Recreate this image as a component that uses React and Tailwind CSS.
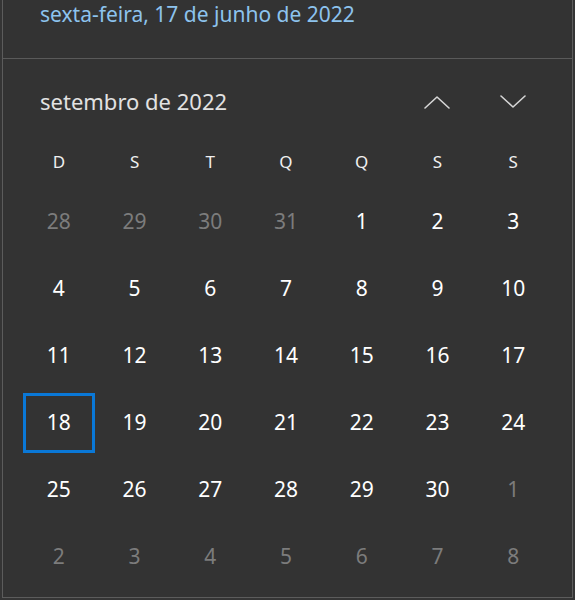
import React from "react";

const weekDays = ["D", "S", "T", "Q", "Q", "S", "S"];

// [day, inMonth]
const weeks = [
  [[28, false], [29, false], [30, false], [31, false], [1, true], [2, true], [3, true]],
  [[4, true], [5, true], [6, true], [7, true], [8, true], [9, true], [10, true]],
  [[11, true], [12, true], [13, true], [14, true], [15, true], [16, true], [17, true]],
  [[18, true], [19, true], [20, true], [21, true], [22, true], [23, true], [24, true]],
  [[25, true], [26, true], [27, true], [28, true], [29, true], [30, true], [1, false]],
  [[2, false], [3, false], [4, false], [5, false], [6, false], [7, false], [8, false]],
];

function Chevron({ up }) {
  return (
    <svg width="28" height="16" viewBox="0 0 28 16" fill="none">
      <path
        d={up ? "M2 14 L14 3 L26 14" : "M2 2 L14 13 L26 2"}
        stroke="#d6d6d6"
        strokeWidth="1.6"
        strokeLinecap="round"
        strokeLinejoin="round"
      />
    </svg>
  );
}

export default function App() {
  return (
    <div
      className="w-[575px] h-[600px] bg-[#353535] overflow-hidden"
      style={{ fontFamily: '"Noto Sans", "Open Sans", sans-serif' }}
    >
      <div className="ml-[2px] w-[571px] h-[598px] bg-[#333333] border-x border-b border-[#5c5c5c]">
        <div className="h-[58px] pl-[37px]">
          <p className="text-[21px] leading-[28px] text-[#8dc3ee]">
            sexta-feira, 17 de junho de 2022
          </p>
        </div>
        <div className="h-px bg-[#5a5a5a]" />

        <div className="pl-[18px] w-[548px]">
          <div className="h-[84px] grid grid-cols-7 items-center">
            <span className="col-span-5 pl-[19px] text-[22px] text-[#e2e2e2]">
              setembro de 2022
            </span>
            <div className="flex justify-center pt-[2px]">
              <Chevron up />
            </div>
            <div className="flex justify-center pt-[2px]">
              <Chevron />
            </div>
          </div>

          <div className="h-[38px] grid grid-cols-7 items-center">
            {weekDays.map((d, i) => (
              <span key={i} className="text-center text-[17px] text-[#f0f0f0]">
                {d}
              </span>
            ))}
          </div>

          <div className="mt-[7px]">
            {weeks.map((week, w) => (
              <div key={w} className="h-[67px] grid grid-cols-7">
                {week.map(([day, inMonth], i) => {
                  const selected = inMonth && day === 18;
                  return (
                    <div key={i} className="flex items-center justify-center">
                      <div
                        className={
                          "w-[72px] h-[60px] flex items-center justify-center text-[21px] " +
                          (selected ? "border-[3px] border-[#0a78d7] " : "") +
                          (inMonth ? "text-white" : "text-[#7c7c7c]")
                        }
                      >
                        {day}
                      </div>
                    </div>
                  );
                })}
              </div>
            ))}
          </div>
        </div>
      </div>
    </div>
  );
}
